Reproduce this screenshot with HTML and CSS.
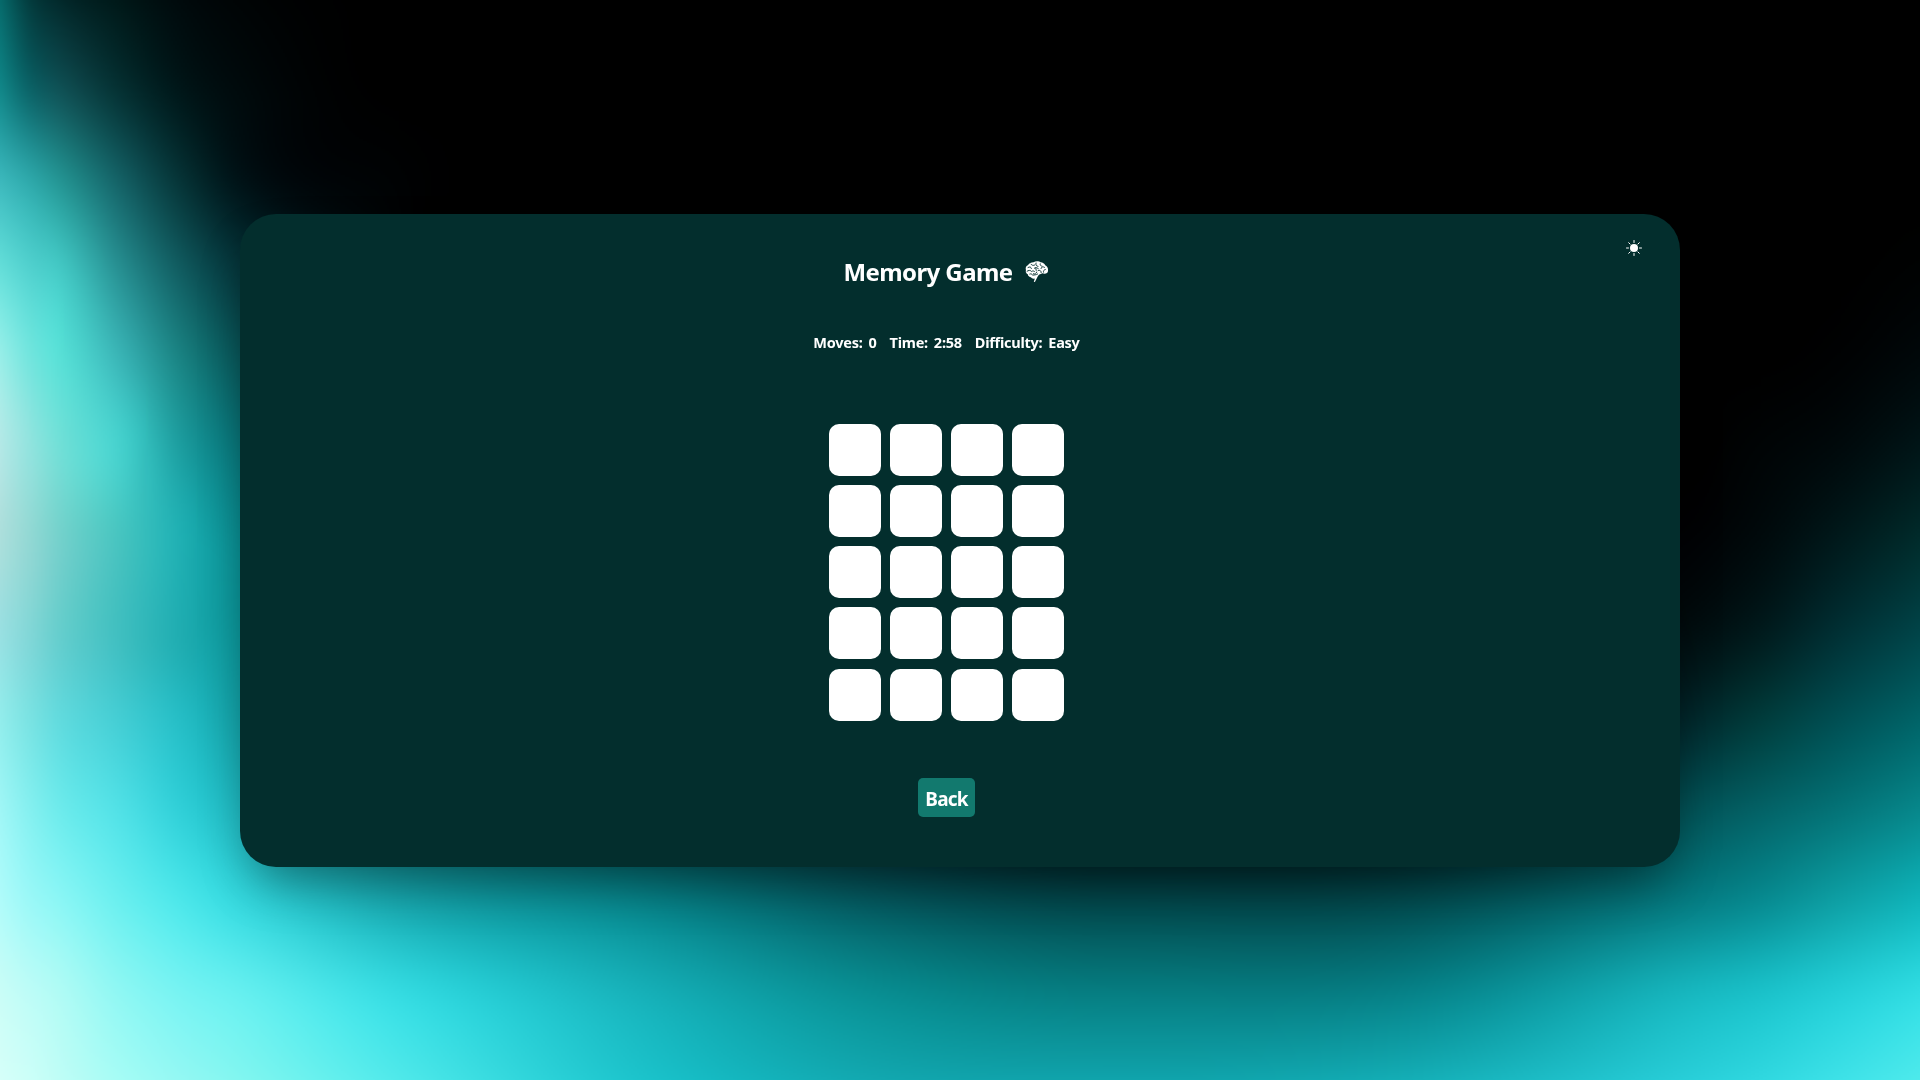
FILE: index.html
```html
<!DOCTYPE html>
<html lang="en">
<head>
<meta charset="utf-8">
<title>Memory Game</title>
<link rel="stylesheet" href="styles.css">
</head>
<body>
<canvas class="backdrop" width="960" height="540"></canvas>
<main class="panel">
  <button class="theme" aria-label="Toggle theme">
    <svg viewBox="0 0 16 16" width="16" height="16"><circle cx="8" cy="8" r="4" fill="#fff"/><path d="M8 .5v2M8 13.500v2M.5 8h2M13.500 8h2M2.700 2.700l1.400 1.400M11.900 11.900l1.400 1.400M2.700 13.300l1.400-1.400M11.900 4.100l1.400-1.400" stroke="#fff" stroke-linecap="round"/></svg>
  </button>
  <h1 class="title"><span class="name">Memory Game</span>
    <svg class="brain" viewBox="0 0 24 22" width="24" height="22">
      <path fill="#fff" d="M8.500 1.200C10.500-.1 14 0 15.500 1.200c2.300.1 4 1.400 4.700 3 1.900 1 3.100 3 2.800 5 .3 1.700-.9 3.200-2.400 3.200-.9.700-2.100.2-3.300-.2-1.200.5-2 .9-3 1.200-1 .8-1.500 1.800-2 2.800l-2.400 4.900-1.100-.4 1.100-3.300c-1.600.6-3.300.1-4-1.200C4.800 16.300 2.700 15 2.800 13.200 1 12.400.4 10.500 1 9 .2 7.200 1 5 2.900 4.300 4 2.400 6.200 1.200 8.500 1.200z"/>
      <path class="folds" d="M3 6.500c1.800-1.200 3.200-.4 3.400 1M2 10.300c1.300-1.300 3.600-1.200 4.600.2 1-.9 2.600-.7 3.200.3M6 3.200c.8 1.200 2.300 1.600 3.600.9M11 2c-.7 1.800.3 3.200 2 3.400M9.300 7.200c1.100-1 3.300-.9 4 .5M15.200 2.800c-.4 1.200.5 2.300 1.800 2.400M16 7.500c.2-1.600 2.100-2.200 3.500-1.200M20.300 8.500c-1.300.3-2.200 1.300-1.800 2.700M13.200 9.300c1.800-.3 3.200.6 3 2.300M11.800 11c-.3 1.700-1.600 2.300-3.400 1.800M4.800 13c1.200-.5 2.400.1 2.800 1.200 1.700-.4 3.400 0 5.100-1.200M10.800 7l.4 2.400"/>
    </svg>
  </h1>
  <div class="stats">
    <p class="stat"><span>Moves:</span><span>0</span></p>
    <p class="stat"><span>Time:</span><span>2:58</span></p>
    <p class="stat"><span>Difficulty:</span><span>Easy</span></p>
  </div>
  <div class="board">
    <i class="tile"></i><i class="tile"></i><i class="tile"></i><i class="tile"></i>
    <i class="tile"></i><i class="tile"></i><i class="tile"></i><i class="tile"></i>
    <i class="tile"></i><i class="tile"></i><i class="tile"></i><i class="tile"></i>
    <i class="tile"></i><i class="tile"></i><i class="tile"></i><i class="tile"></i>
    <i class="tile"></i><i class="tile"></i><i class="tile"></i><i class="tile"></i>
  </div>
  <button class="back">Back</button>
</main>
<script src="backdrop.js"></script>
</body>
</html>
```
FILE: styles.css
```css
* { box-sizing: border-box; }
body {
  margin: 0;
  height: 100vh;
  overflow: hidden;
  background: #000;
  color: #fff;
  font-family: "Noto Sans", "Open Sans", sans-serif;
  font-weight: 700;
  display: flex;
  align-items: center;
  justify-content: center;
}
.backdrop {
  position: absolute;
  inset: 0;
  width: 100%;
  height: 100%;
}
.panel {
  position: relative;
  width: 1440px;
  height: 653px;
  padding: 38px 27px 0 0;
  border-radius: 36px;
  background: #032e2d;
  box-shadow: 0 25px 50px -12px rgba(0, 0, 0, .4);
  display: flex;
  flex-direction: column;
  align-items: center;
}
.theme {
  position: absolute;
  top: 26.5px;
  right: 38px;
  padding: 0;
  border: 0;
  background: none;
  line-height: 0;
}
.title {
  margin: 0;
  height: 40px;
  display: flex;
  align-items: center;
  gap: 13px;
  font-size: 24px;
  line-height: 42px;
}
.name { letter-spacing: -.6px; }
.brain { flex: none; }
.folds {
  fill: none;
  stroke: #032e2d;
  stroke-width: .9;
  stroke-linecap: round;
}
.stats {
  display: flex;
  gap: 13px;
  margin-top: 39px;
  height: 22px;
  font-size: 14.5px;
  line-height: 22px;
  letter-spacing: -.26px;
}
.stat {
  margin: 0;
  display: flex;
  gap: 6px;
}
.board {
  margin-top: 71px;
  display: grid;
  grid-template-columns: repeat(4, 52px);
  grid-auto-rows: 52px;
  gap: 9.25px;
}
.tile {
  border-radius: 10px;
  background: #fff;
}
.back {
  margin-top: 57px;
  width: 57px;
  height: 39px;
  padding: 3px 0 0;
  border: 0;
  border-radius: 5px;
  background: #12796e;
  color: #fff;
  font: inherit;
  font-size: 19px;
  line-height: 36px;
  letter-spacing: -.8px;
}
```
FILE: backdrop.js
```js
// Mesh gradient: colours at the grid nodes, joined by smooth cubic curves.
const xs = [0, 30, 60, 120, 180, 240, 400, 640, 880, 1120, 1400, 1680, 1760, 1840, 1920];
const ys = [0, 90, 180, 270, 360, 450, 540, 630, 720, 810, 900, 990, 1080];
const mesh = [
  '066a6b 033c3e 02292b 001818 000a0c 000405 000000 000000 000000 000000 000000 000000 000000 000000 000000',
  '12888a 0c6468 0f5256 053133 001719 000a0c 000000 000000 000000 000000 000000 000000 000000 000000 000000',
  '3cb8bc 2ea8aa 249493 146165 063437 001317 000203 000000 000000 000000 000000 000000 000000 000000 000000',
  '66dfda 52d2cf 44c9c5 279092 115d61 05363b 000506 000000 000000 000000 000000 000000 000000 000000 000202',
  '9aeee8 74e5de 5ae0d7 3ab6b7 1a8484 08585b 001012 000000 000000 000000 000000 000000 000000 000203 00080a',
  'b4e8e6 92e3de 72dfd7 46d1cd 1d9fa1 08777b 002022 000000 000000 000000 000000 000000 000405 000a0c 001618',
  'acdfdc 92d8d4 74d1cc 47c4c0 20b0b3 0a8e92 003033 000000 000000 000000 000000 000204 000a0c 001a1c 002c2c',
  '9ae0e2 82d7d7 66cecd 40bfc0 20adb1 0c979b 004448 001012 000000 000000 000000 000c0e 001a1c 003034 004448',
  '93edec 7ae3e3 62dbde 44ced4 26bec6 14a5ab 04666a 002022 000000 000000 000405 00262a 003c3c 005054 006468',
  'a0f6f6 85f0f0 6eebec 51e1e6 31d0d8 20bcc4 0c8085 02484c 012024 000c0e 001416 025054 036266 047478 07888c',
  'b0fbfa 9bf8f7 8bf6f5 6aefef 4de7ea 36d9df 18a9b0 07848a 04585e 02464a 024a4e 057a80 078a90 0ea0a5 10b4ba',
  'c9fdf7 bcfcf7 affbf5 8ef7f3 76f3f2 65efef 34dae0 16b0b8 088c90 067c80 068086 16b4bc 1ac0c8 24ced6 30dce2',
  'd6fff9 ccfff8 bffdf6 a6fcf5 94f8f3 82f6f0 50e9ea 1cc4cc 12a8b0 10a4ac 14aeb6 28ced8 30d8e0 3ee2e8 4eeaec'
].map(row => row.split(' ').map(h => [0, 2, 4].map(i => parseInt(h.substr(i, 2), 16))));

function curve(pos, val, p) {
  let i = 0;
  const last = pos.length - 1;
  while (i < last - 1 && p > pos[i + 1]) i++;
  const h = pos[i + 1] - pos[i];
  const t = (p - pos[i]) / h;
  const slope = k => {
    if (k === 0 || k === last) {
      const a = k === 0 ? 0 : last - 1;
      return (val[a + 1] - val[a]) / (pos[a + 1] - pos[a]);
    }
    const l = (val[k] - val[k - 1]) / (pos[k] - pos[k - 1]);
    const r = (val[k + 1] - val[k]) / (pos[k + 1] - pos[k]);
    return l * r <= 0 ? 0 : (l + r) / 2;
  };
  const t2 = t * t, t3 = t2 * t;
  return (2 * t3 - 3 * t2 + 1) * val[i] + (t3 - 2 * t2 + t) * h * slope(i)
    + (3 * t2 - 2 * t3) * val[i + 1] + (t3 - t2) * h * slope(i + 1);
}

const canvas = document.querySelector('.backdrop');
const ctx = canvas.getContext('2d');
const { width, height } = canvas;
const image = ctx.createImageData(width, height);
for (let x = 0; x < width; x++) {
  for (let c = 0; c < 3; c++) {
    const column = mesh.map(row => curve(xs, row.map(n => n[c]), (x + .5) * 2));
    for (let y = 0; y < height; y++) {
      const o = (y * width + x) * 4;
      image.data[o + c] = curve(ys, column, (y + .5) * 2);
      image.data[o + 3] = 255;
    }
  }
}
ctx.putImageData(image, 0, 0);
```
